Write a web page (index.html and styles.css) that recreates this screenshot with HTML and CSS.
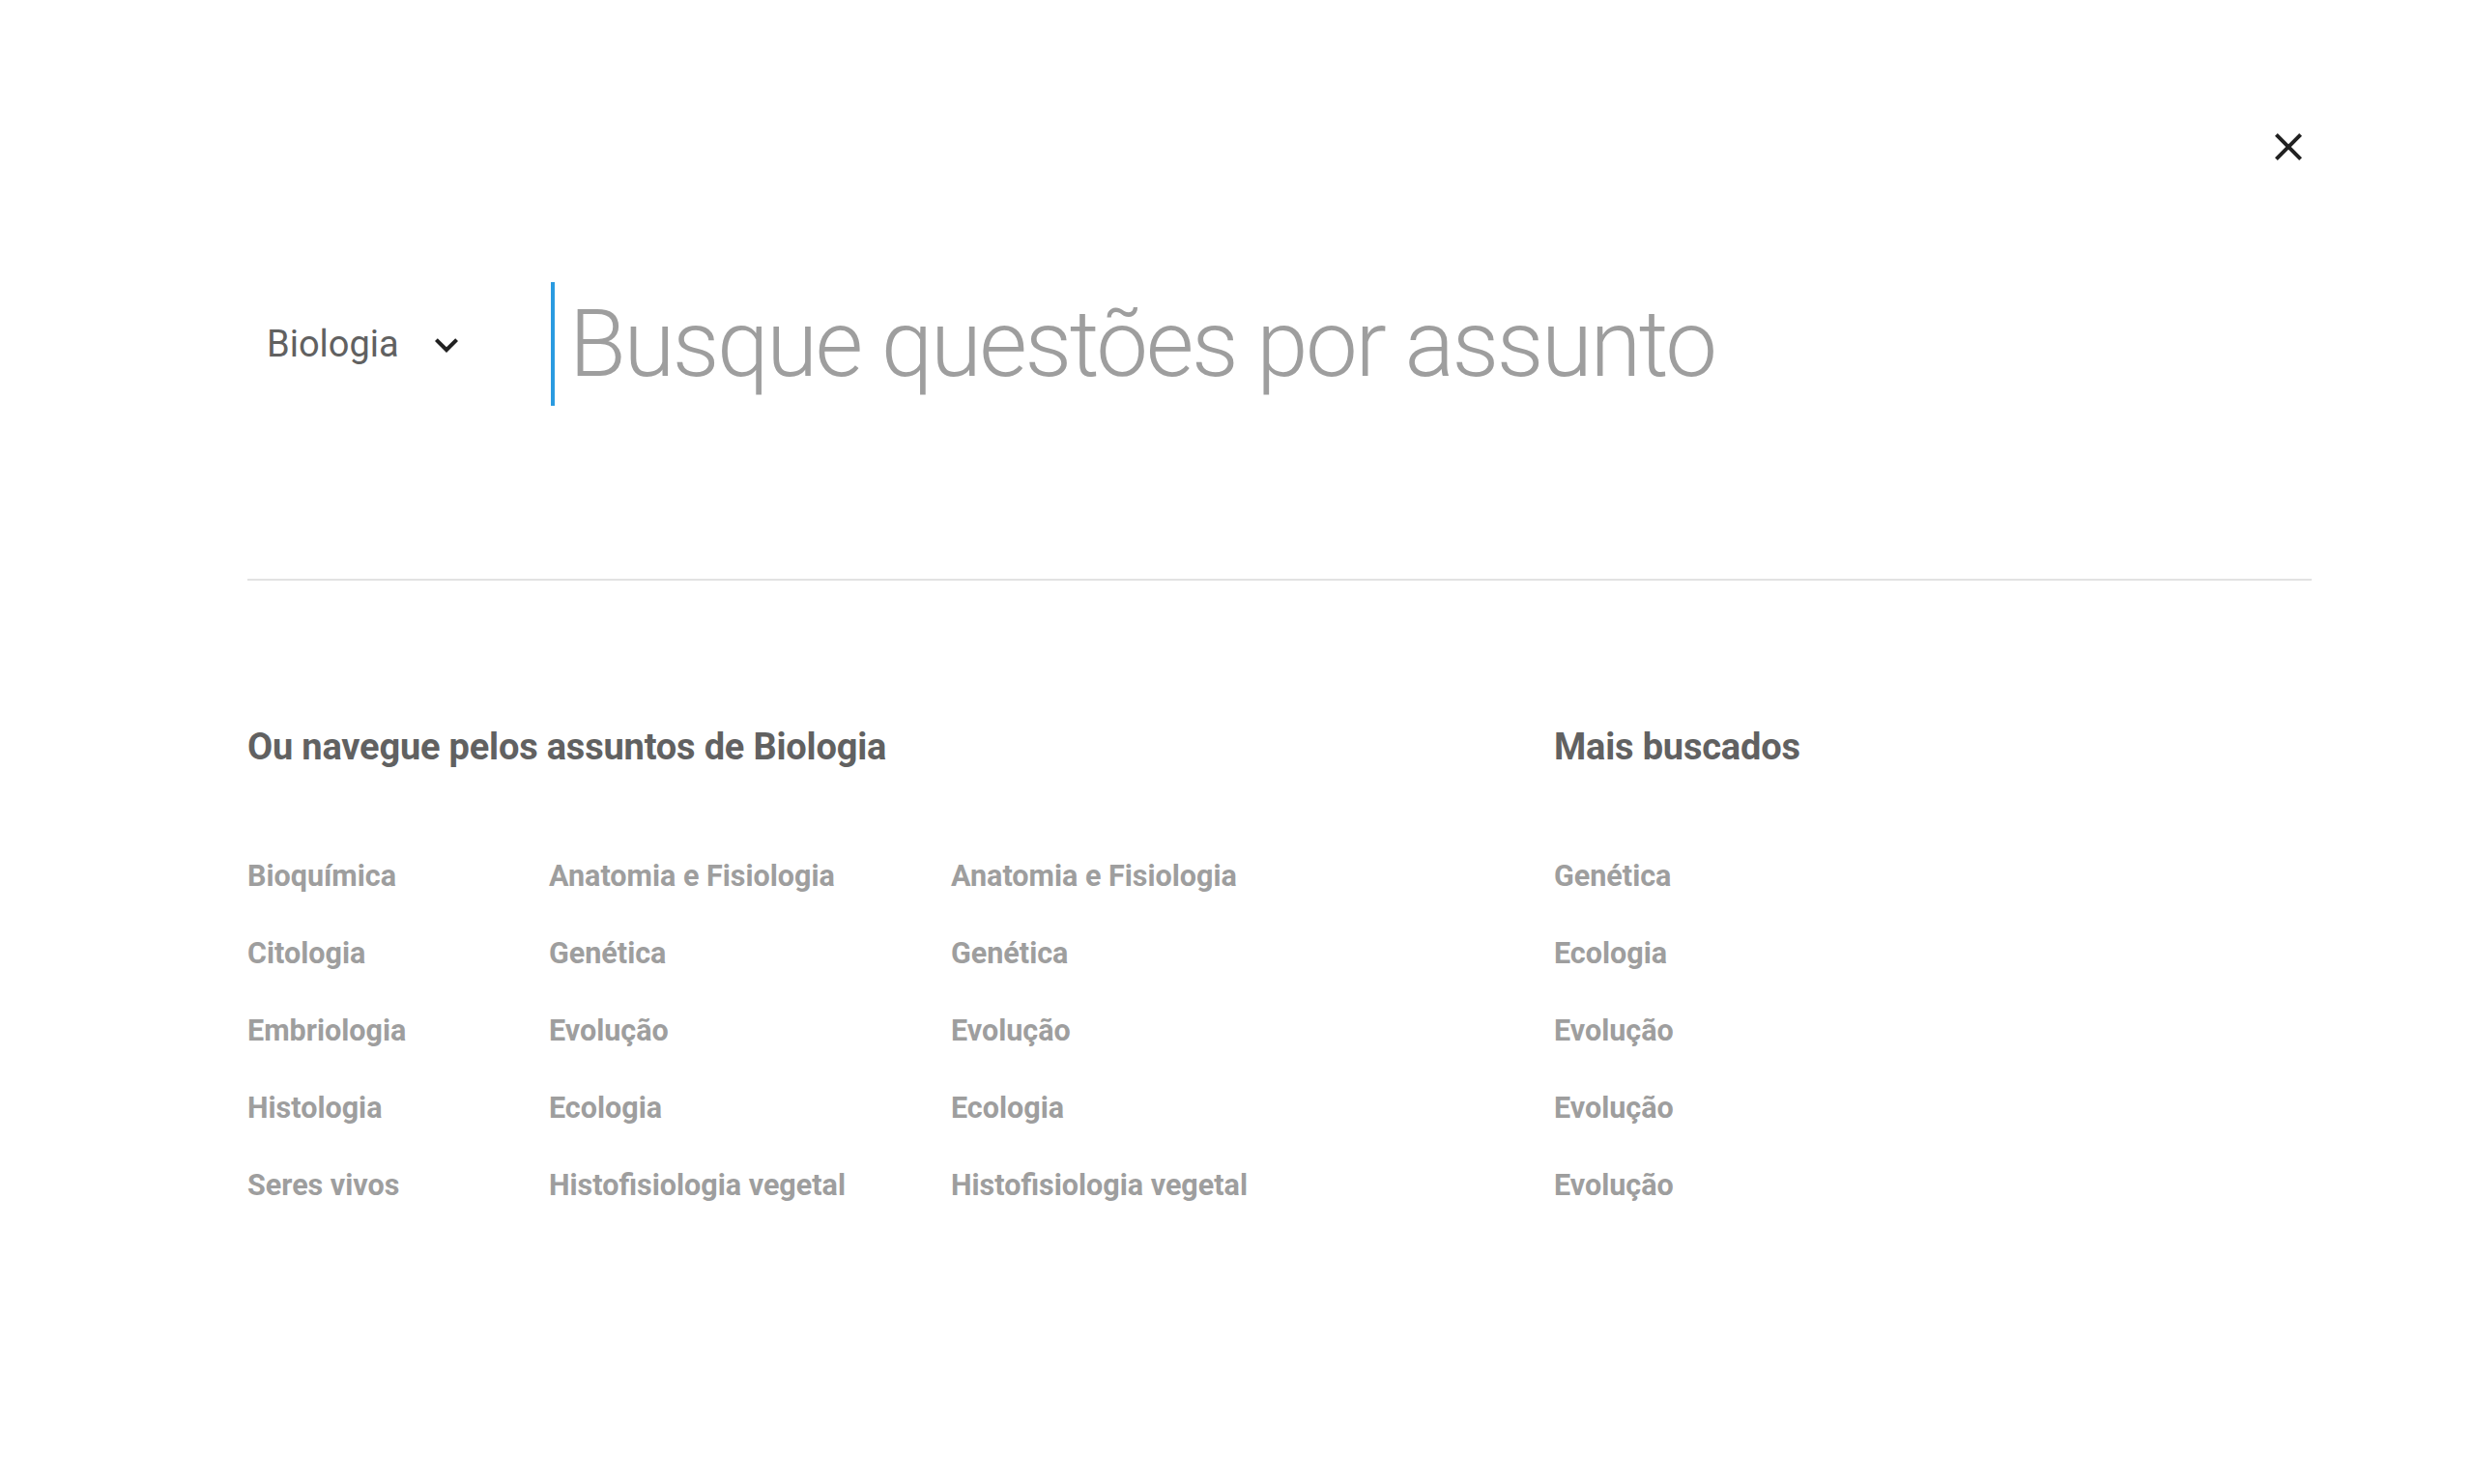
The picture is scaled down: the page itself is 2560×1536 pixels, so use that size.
FILE: index.html
```html
<!DOCTYPE html>
<html lang="pt-BR">
<head>
<meta charset="utf-8">
<title>Busque questões por assunto</title>
<link rel="stylesheet" href="styles.css">
</head>
<body>
<div class="page">
  <div class="close-row">
    <button class="close" aria-label="Fechar">
      <svg viewBox="0 0 24 24" width="48" height="48"><path d="M19 6.41L17.59 5 12 10.59 6.41 5 5 6.41 10.59 12 5 17.59 6.41 19 12 13.41 17.59 19 19 17.59 13.41 12z" fill="#212121"/></svg>
    </button>
  </div>

  <div class="search">
    <div class="subject">
      <button class="subject-btn">
        <span class="subject-label">Biologia</span>
        <svg class="chevron" viewBox="0 0 24 24" width="48" height="48"><path d="M16.59 8.59L12 13.17 7.41 8.59 6 10l6 6 6-6z" fill="#212121"/></svg>
      </button>
    </div>
    <div class="field">
      <span class="caret"></span>
      <input class="query" type="text" placeholder="Busque questões por assunto">
    </div>
  </div>

  <hr class="divider">

  <div class="browse">
    <section class="topics">
      <h2 class="title">Ou navegue pelos assuntos de Biologia</h2>
      <div class="cols">
        <ul class="list">
          <li><a>Bioquímica</a></li>
          <li><a>Citologia</a></li>
          <li><a>Embriologia</a></li>
          <li><a>Histologia</a></li>
          <li><a>Seres vivos</a></li>
        </ul>
        <ul class="list">
          <li><a>Anatomia e Fisiologia</a></li>
          <li><a>Genética</a></li>
          <li><a>Evolução</a></li>
          <li><a>Ecologia</a></li>
          <li><a>Histofisiologia vegetal</a></li>
        </ul>
        <ul class="list">
          <li><a>Anatomia e Fisiologia</a></li>
          <li><a>Genética</a></li>
          <li><a>Evolução</a></li>
          <li><a>Ecologia</a></li>
          <li><a>Histofisiologia vegetal</a></li>
        </ul>
      </div>
    </section>
    <section class="popular">
      <h2 class="title">Mais buscados</h2>
      <ul class="list">
        <li><a>Genética</a></li>
        <li><a>Ecologia</a></li>
        <li><a>Evolução</a></li>
        <li><a>Evolução</a></li>
        <li><a>Evolução</a></li>
      </ul>
    </section>
  </div>
</div>
</body>
</html>
```

FILE: styles.css
```css
html, body {
  margin: 0;
  padding: 0;
  background: #ffffff;
}

body {
  font-family: Roboto, "Noto Sans", "Liberation Sans", sans-serif;
  color: #616161;
}

.page {
  padding: 128px 168px 0 256px;
}

.close-row {
  display: flex;
  justify-content: flex-end;
  height: 48px;
}

.close {
  width: 48px;
  height: 48px;
  padding: 0;
  border: none;
  background: none;
  cursor: pointer;
}

.close svg {
  display: block;
}

.search {
  display: flex;
  align-items: center;
  margin-top: 116px;
  height: 128px;
}

.subject {
  width: 314px;
  flex: none;
}

.subject-btn {
  display: flex;
  align-items: center;
  gap: 25px;
  padding: 0 0 0 20px;
  border: none;
  background: none;
  font-family: Roboto, "Noto Sans", "Liberation Sans", sans-serif;
  font-size: 38px;
  font-weight: 400;
  color: #616161;
  cursor: pointer;
}

.chevron {
  display: block;
  margin-top: 2px;
}

.field {
  display: flex;
  align-items: center;
  flex: 1;
  height: 128px;
}

.caret {
  width: 4px;
  height: 128px;
  background: #2a9be0;
  flex: none;
}

.query {
  flex: 1;
  height: 128px;
  margin-left: 15px;
  padding: 0;
  border: none;
  outline: none;
  background: transparent;
  font-family: Roboto, "Noto Sans", "Liberation Sans", sans-serif;
  font-size: 96px;
  font-weight: 300;
  letter-spacing: -2.4px;
  color: #616161;
}

.query::placeholder {
  color: #9e9e9e;
  opacity: 1;
}

.divider {
  margin: 179px 0 0 0;
  border: none;
  height: 2px;
  background: #e2e2e2;
}

.browse {
  display: grid;
  grid-template-columns: 1352px 1fr;
  margin-top: 150px;
}

.title {
  margin: 0;
  font-size: 38px;
  line-height: 44px;
  font-weight: 700;
  color: #616161;
  letter-spacing: -0.2px;
}

.cols {
  display: grid;
  grid-template-columns: 312px 416px auto;
}

.list {
  list-style: none;
  margin: 94px 0 0 0;
  padding: 0;
  display: flex;
  flex-direction: column;
  gap: 44px;
}

.list li {
  font-size: 30.5px;
  line-height: 36px;
  font-weight: 700;
  color: #9e9e9e;
}

.list a {
  cursor: pointer;
}
```
